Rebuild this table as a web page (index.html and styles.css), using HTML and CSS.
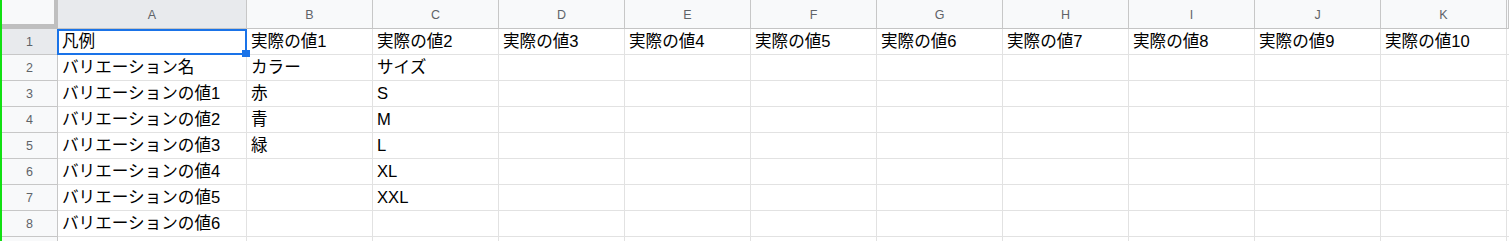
FILE: index.html
```html
<!DOCTYPE html>
<html lang="ja">
<head>
<meta charset="utf-8">
<title>バリエーション</title>
<link rel="stylesheet" href="styles.css">
</head>
<body>
<div class="sheet">
  <div class="row head-row">
    <div class="corner"></div>
    <div class="col-head is-active">A</div>
    <div class="col-head">B</div>
    <div class="col-head">C</div>
    <div class="col-head">D</div>
    <div class="col-head">E</div>
    <div class="col-head">F</div>
    <div class="col-head">G</div>
    <div class="col-head">H</div>
    <div class="col-head">I</div>
    <div class="col-head">J</div>
    <div class="col-head">K</div>
    <div class="col-head"></div>
  </div>

  <div class="row">
    <div class="row-head is-active">1</div>
    <div class="cell">凡例</div>
    <div class="cell">実際の値1</div>
    <div class="cell">実際の値2</div>
    <div class="cell">実際の値3</div>
    <div class="cell">実際の値4</div>
    <div class="cell">実際の値5</div>
    <div class="cell">実際の値6</div>
    <div class="cell">実際の値7</div>
    <div class="cell">実際の値8</div>
    <div class="cell">実際の値9</div>
    <div class="cell">実際の値10</div>
    <div class="cell"></div>
  </div>

  <div class="row">
    <div class="row-head">2</div>
    <div class="cell">バリエーション名</div>
    <div class="cell">カラー</div>
    <div class="cell">サイズ</div>
    <div class="cell"></div><div class="cell"></div><div class="cell"></div><div class="cell"></div>
    <div class="cell"></div><div class="cell"></div><div class="cell"></div><div class="cell"></div><div class="cell"></div>
  </div>

  <div class="row">
    <div class="row-head">3</div>
    <div class="cell">バリエーションの値1</div>
    <div class="cell">赤</div>
    <div class="cell">S</div>
    <div class="cell"></div><div class="cell"></div><div class="cell"></div><div class="cell"></div>
    <div class="cell"></div><div class="cell"></div><div class="cell"></div><div class="cell"></div><div class="cell"></div>
  </div>

  <div class="row">
    <div class="row-head">4</div>
    <div class="cell">バリエーションの値2</div>
    <div class="cell">青</div>
    <div class="cell">M</div>
    <div class="cell"></div><div class="cell"></div><div class="cell"></div><div class="cell"></div>
    <div class="cell"></div><div class="cell"></div><div class="cell"></div><div class="cell"></div><div class="cell"></div>
  </div>

  <div class="row">
    <div class="row-head">5</div>
    <div class="cell">バリエーションの値3</div>
    <div class="cell">緑</div>
    <div class="cell">L</div>
    <div class="cell"></div><div class="cell"></div><div class="cell"></div><div class="cell"></div>
    <div class="cell"></div><div class="cell"></div><div class="cell"></div><div class="cell"></div><div class="cell"></div>
  </div>

  <div class="row">
    <div class="row-head">6</div>
    <div class="cell">バリエーションの値4</div>
    <div class="cell"></div>
    <div class="cell">XL</div>
    <div class="cell"></div><div class="cell"></div><div class="cell"></div><div class="cell"></div>
    <div class="cell"></div><div class="cell"></div><div class="cell"></div><div class="cell"></div><div class="cell"></div>
  </div>

  <div class="row">
    <div class="row-head">7</div>
    <div class="cell">バリエーションの値5</div>
    <div class="cell"></div>
    <div class="cell">XXL</div>
    <div class="cell"></div><div class="cell"></div><div class="cell"></div><div class="cell"></div>
    <div class="cell"></div><div class="cell"></div><div class="cell"></div><div class="cell"></div><div class="cell"></div>
  </div>

  <div class="row">
    <div class="row-head">8</div>
    <div class="cell">バリエーションの値6</div>
    <div class="cell"></div>
    <div class="cell"></div>
    <div class="cell"></div><div class="cell"></div><div class="cell"></div><div class="cell"></div>
    <div class="cell"></div><div class="cell"></div><div class="cell"></div><div class="cell"></div><div class="cell"></div>
  </div>

  <!-- next row, only its top edge is in view -->
  <div class="row">
    <div class="row-head"></div>
    <div class="cell"></div><div class="cell"></div><div class="cell"></div>
    <div class="cell"></div><div class="cell"></div><div class="cell"></div><div class="cell"></div>
    <div class="cell"></div><div class="cell"></div><div class="cell"></div><div class="cell"></div><div class="cell"></div>
  </div>

  <!-- active cell outline with fill handle, drawn over A1 -->
  <div class="selection"><span class="handle"></span></div>
</div>
</body>
</html>
```

FILE: styles.css
```css
html, body {
  margin: 0;
  padding: 0;
  height: 100%;
  overflow: hidden;
  background: #ffffff;
}

body {
  border-left: 2px solid #12e012;
  box-sizing: border-box;
  font-family: "Liberation Sans", Arial, "Noto Sans CJK JP", sans-serif;
}

.sheet {
  position: relative;
}

.row {
  display: grid;
  grid-template-columns: 56px 189px repeat(10, 126px) 1fr;
  height: 26px;
}

.head-row {
  height: 29px;
}

.row > div {
  box-sizing: border-box;
  overflow: hidden;
  white-space: nowrap;
}

/* top-left corner with the frozen-pane bars */
.corner {
  background: #f8f9fa;
  border-right: 4px solid #bfbfbf;
  border-bottom: 5px solid #bfbfbf;
}

.col-head {
  background: #f8f9fa;
  border-right: 1px solid #c7c7c7;
  border-bottom: 1px solid #c4c4c4;
  color: #5f6368;
  font-size: 12.5px;
  display: flex;
  align-items: center;
  justify-content: center;
  padding-top: 1px;
}

.row-head {
  background: #f8f9fa;
  border-right: 1px solid #c7c7c7;
  border-bottom: 1px solid #c7c7c7;
  color: #5f6368;
  font-size: 12.5px;
  display: flex;
  align-items: center;
  justify-content: center;
}

.is-active {
  background: #e8eaed;
}

.cell {
  border-right: 1px solid #e2e2e2;
  border-bottom: 1px solid #e2e2e2;
  color: #000000;
  font-size: 16.6px;
  line-height: 25px;
  padding: 0 4px;
}

.selection {
  position: absolute;
  left: 55px;
  top: 29px;
  width: 190px;
  height: 26px;
  box-sizing: border-box;
  border: 2px solid #1a73e8;
  pointer-events: none;
}

.handle {
  position: absolute;
  right: -5px;
  bottom: -4px;
  width: 8px;
  height: 7px;
  background: #1a73e8;
}
```
